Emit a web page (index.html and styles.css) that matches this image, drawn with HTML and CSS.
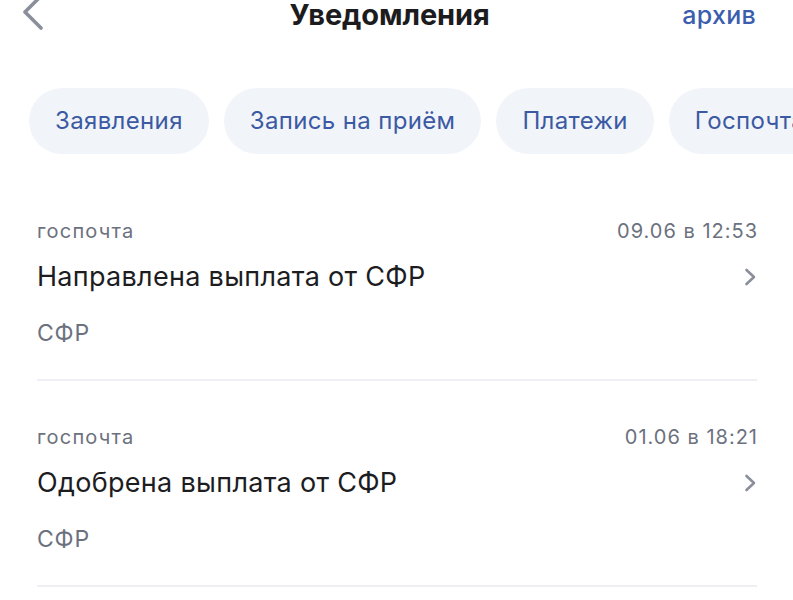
FILE: index.html
```html
<!DOCTYPE html>
<html lang="ru">
<head>
<meta charset="utf-8">
<link rel="stylesheet" href="styles.css">
</head>
<body>
<div class="screen">
  <header class="topbar">
    <div class="back">
      <svg width="30" height="30" viewBox="0 0 30 30"><polyline points="17,-3 2,12 18,28" fill="none" stroke="#8a8f9b" stroke-width="3.6" stroke-linecap="round" stroke-linejoin="round"/></svg>
    </div>
    <h1 class="title">Уведомления</h1>
    <div class="archive">архив</div>
  </header>

  <nav class="chips">
    <span class="chip">Заявления</span>
    <span class="chip">Запись на приём</span>
    <span class="chip">Платежи</span>
    <span class="chip">Госпочта</span>
  </nav>

  <ul class="list">
    <li class="item">
      <div class="meta"><span>госпочта</span><span>09.06 в 12:53</span></div>
      <div class="head"><span>Направлена выплата от СФР</span>
        <svg class="chev" width="13" height="18" viewBox="0 0 13 18"><polyline points="2.5,2 10,9 2.5,16" fill="none" stroke="#8a8f9b" stroke-width="2.6" stroke-linecap="round" stroke-linejoin="round"/></svg>
      </div>
      <div class="sub">СФР</div>
    </li>
    <li class="item">
      <div class="meta"><span>госпочта</span><span>01.06 в 18:21</span></div>
      <div class="head"><span>Одобрена выплата от СФР</span>
        <svg class="chev" width="13" height="18" viewBox="0 0 13 18"><polyline points="2.5,2 10,9 2.5,16" fill="none" stroke="#8a8f9b" stroke-width="2.6" stroke-linecap="round" stroke-linejoin="round"/></svg>
      </div>
      <div class="sub">СФР</div>
    </li>
  </ul>
</div>
</body>
</html>
```
FILE: styles.css
```css
html, body {
  margin: 0;
  padding: 0;
  background: #ffffff;
}
body {
  font-family: "Inter", "Roboto", "Liberation Sans", sans-serif;
  color: #1d1d1f;
  width: 793px;
  height: 600px;
  overflow: hidden;
}
.screen {
  width: 793px;
}
.topbar {
  display: grid;
  grid-template-columns: 1fr auto 1fr;
  align-items: center;
  height: 30px;
  padding: 0 37px 0 23px;
}
.back {
  display: flex;
  align-items: center;
  height: 30px;
}
.back svg { display: block; }
.title {
  margin: 0;
  font-size: 29px;
  font-weight: 700;
  line-height: 30px;
  color: #1c1c1e;
  letter-spacing: -0.1px;
}
.archive {
  justify-self: end;
  font-size: 25px;
  font-weight: 500;
  color: #3b5dae;
  line-height: 30px;
  letter-spacing: 0.3px;
}
.chips {
  display: flex;
  gap: 15px;
  margin-top: 58px;
  padding-left: 29px;
  white-space: nowrap;
  overflow: hidden;
}
.chip {
  flex: none;
  height: 66px;
  line-height: 66px;
  padding: 0 26px;
  border-radius: 33px;
  background: #f1f4f9;
  color: #3b5aa3;
  font-size: 24px;
  letter-spacing: 0.35px;
}
.list {
  list-style: none;
  margin: 21px 0 0;
  padding: 0 36px 0 37px;
}
.item {
  padding-top: 44px;
  padding-bottom: 32px;
  border-bottom: 2px solid #eeeff2;
}
.meta {
  display: flex;
  justify-content: space-between;
  font-size: 20px;
  line-height: 24px;
  letter-spacing: 1.2px;
  color: #6c717e;
}
.meta span:last-child { letter-spacing: 1px; margin-right: -1px; }
.head {
  display: flex;
  justify-content: space-between;
  align-items: center;
  margin-top: 18px;
  font-size: 27px;
  line-height: 32px;
  letter-spacing: 0.3px;
  color: #1d1d1f;
}
.chev { display: block; }
.sub {
  margin-top: 26px;
  font-size: 23px;
  line-height: 28px;
  letter-spacing: 0.8px;
  color: #6c717e;
}
```
